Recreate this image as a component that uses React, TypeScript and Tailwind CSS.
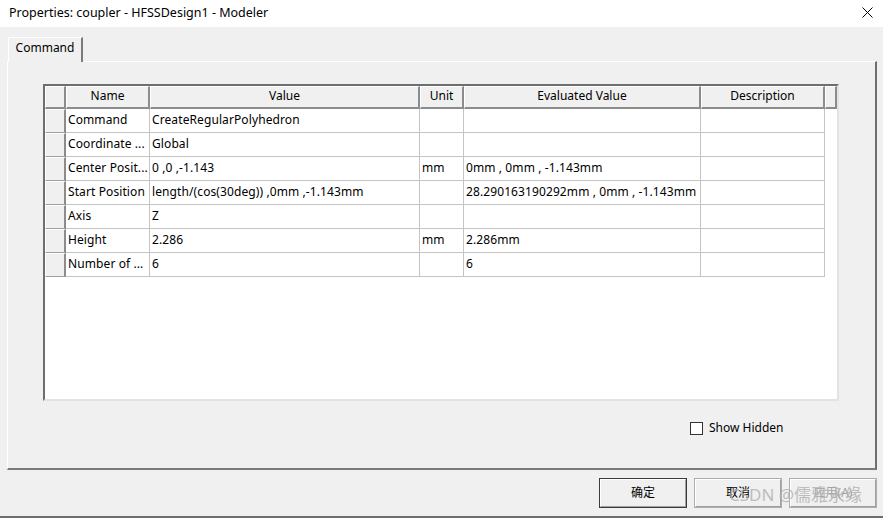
import React from "react";

const cols = [
  { w: 84, label: "Name" },
  { w: 270, label: "Value" },
  { w: 44, label: "Unit" },
  { w: 237, label: "Evaluated Value" },
  { w: 124, label: "Description" },
];

const rows: string[][] = [
  ["Command", "CreateRegularPolyhedron", "", "", ""],
  ["Coordinate ...", "Global", "", "", ""],
  ["Center Posit...", "0 ,0 ,-1.143", "mm", "0mm , 0mm , -1.143mm", ""],
  ["Start Position", "length/(cos(30deg)) ,0mm ,-1.143mm", "", "28.290163190292mm , 0mm , -1.143mm", ""],
  ["Axis", "Z", "", "", ""],
  ["Height", "2.286", "mm", "2.286mm", ""],
  ["Number of ...", "6", "", "6", ""],
];

function Btn({ label, def, disabled }: { label: string; def?: boolean; disabled?: boolean }) {
  return (
    <div
      className={`w-[88px] h-[30px] box-border border ${def ? "border-[#3c3c3c]" : "border-[#adadad]"} bg-[#f0f0f0] flex`}
    >
      <div className="flex-1 flex items-center justify-center border-t border-l border-white border-r border-b border-r-[#a0a0a0] border-b-[#a0a0a0]">
        <span className={`text-[12px] ${disabled ? "text-[#a0a0a0]" : "text-black"}`}>{label}</span>
      </div>
    </div>
  );
}

export default function App() {
  return (
    <div
      className="w-[883px] h-[518px] bg-[#f0f0f0] flex flex-col overflow-hidden relative text-black"
      style={{ fontFamily: '"Noto Sans", "Noto Sans CJK SC", sans-serif' }}
    >
      {/* Title bar */}
      <div className="h-[27px] bg-white flex items-center justify-between pl-[9px] pr-[10px] shrink-0">
        <span className="text-[12.5px] leading-none">Properties: coupler - HFSSDesign1 - Modeler</span>
        <svg width="11" height="11" viewBox="0 0 11 11" className="mb-[2px]">
          <path d="M0.5 0.5 L10.5 10.5 M10.5 0.5 L0.5 10.5" stroke="#000" strokeWidth="1" />
        </svg>
      </div>

      {/* Tab strip */}
      <div className="mt-[10px] pl-[8px] flex h-[24px] shrink-0 relative z-10">
        <div className="h-[25px] w-[75px] box-border bg-[#f0f0f0] border-t border-l border-white border-r-2 border-r-[#7a7a7a] flex items-start justify-center pt-[2px]">
          <span className="text-[12px] leading-[16px]">Command</span>
        </div>
      </div>

      {/* Tab panel */}
      <div className="ml-[7px] w-[870px] h-[409px] box-border border-t border-l border-white border-r-2 border-b-2 border-r-[#6e6e6e] border-b-[#7a7a7a] flex flex-col">
        {/* Grid */}
        <div className="ml-[35px] mt-[22px] w-[796px] h-[317px] box-border border-t-2 border-l-2 border-[#6e6e6e] border-r-2 border-b-2 border-r-[#e3e3e3] border-b-[#e3e3e3] bg-white flex flex-col">
          {/* header */}
          <div className="flex h-[23px] shrink-0">
            <div className="w-[21px] box-border bg-[#f0f0f0] border-t border-l border-white border-r-2 border-b-2 border-r-[#8c8c8c] border-b-[#8c8c8c]" />
            {cols.map((c) => (
              <div
                key={c.label}
                style={{ width: c.w }}
                className="box-border bg-[#f0f0f0] border-t border-l border-white border-r-2 border-b-2 border-r-[#8c8c8c] border-b-[#8c8c8c] flex items-center justify-center pb-[2px]"
              >
                <span className="text-[12px] leading-none">{c.label}</span>
              </div>
            ))}
            <div className="w-[12px] box-border bg-[#f0f0f0] border-t border-l border-white border-r-2 border-b-2 border-r-[#8c8c8c] border-b-[#8c8c8c]" />
          </div>
          {rows.map((r, i) => (
            <div key={i} className="flex h-[24px] shrink-0">
              <div className="w-[21px] box-border bg-[#f0f0f0] border-t border-l border-white border-r-2 border-b border-r-[#8c8c8c] border-b-[#a0a0a0]" />
              {r.map((v, j) => (
                <div
                  key={j}
                  style={{ width: cols[j].w }}
                  className="box-border border-r border-b border-[#c4c4c4] flex items-center pl-[2px] pb-[2px] overflow-hidden whitespace-nowrap"
                >
                  <span className="text-[12px] leading-none tracking-[0.1px]">{v}</span>
                </div>
              ))}
            </div>
          ))}
        </div>

        {/* Show hidden */}
        <div className="mt-[21px] ml-[682px] flex items-center gap-[6px]">
          <div className="w-[13px] h-[13px] box-border border border-[#333] bg-white" />
          <span className="text-[12px] leading-none pb-[1px]">Show Hidden</span>
        </div>
      </div>

      {/* Buttons */}
      <div className="mt-[8px] flex justify-end gap-[7px] pr-[6px]">
        <Btn label="确定" def />
        <Btn label="取消" />
        <Btn label="应用(A)" disabled />
      </div>

      <div className="absolute left-0 right-0 bottom-0 h-[2px] bg-[#6e6e6e]" />

      {/* watermark */}
      <div className="absolute left-[729px] top-[486px] text-[17px] leading-none text-[#b0b0b0] opacity-80 whitespace-nowrap">
        CSDN @儒雅永缘
      </div>
    </div>
  );
}
